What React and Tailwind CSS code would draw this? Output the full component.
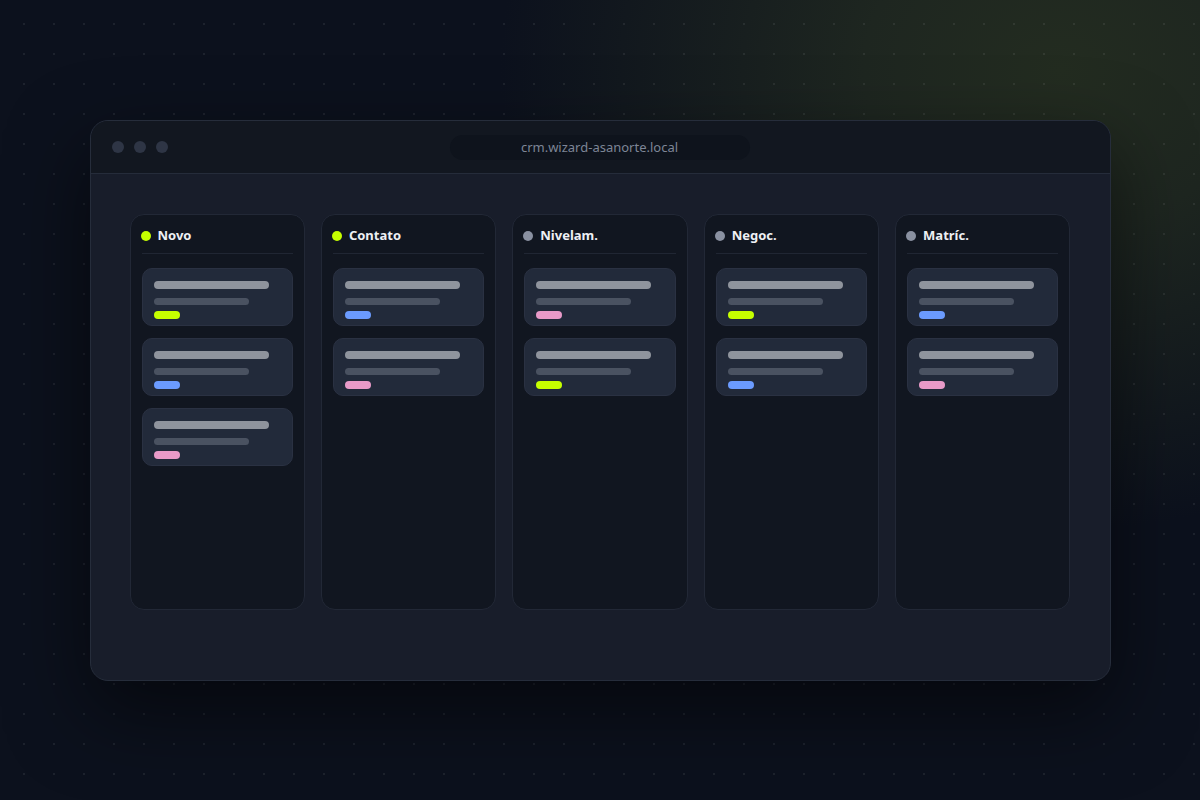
// Pipeline board mock: browser frame with five kanban columns
const COLUMNS = [
  { title: 'Novo', dot: 'bg-[#c6ff00]', tags: ['bg-[#c6ff00]', 'bg-[#6b9bff]', 'bg-[#e89ac8]'] },
  { title: 'Contato', dot: 'bg-[#c6ff00]', tags: ['bg-[#6b9bff]', 'bg-[#e89ac8]'] },
  { title: 'Nivelam.', dot: 'bg-[#8a91a1]', tags: ['bg-[#e89ac8]', 'bg-[#c6ff00]'] },
  { title: 'Negoc.', dot: 'bg-[#8a91a1]', tags: ['bg-[#c6ff00]', 'bg-[#6b9bff]'] },
  { title: 'Matríc.', dot: 'bg-[#8a91a1]', tags: ['bg-[#6b9bff]', 'bg-[#e89ac8]'] },
]

function Card({ tag }) {
  return (
    <div className="h-[58px] rounded-[10px] border border-[#2a3142] bg-[#222a3a] px-[11px] pt-3">
      <div className="h-2 w-[115px] rounded-full bg-[#8f949d]" />
      <div className="mt-[9px] h-[7px] w-[95px] rounded-full bg-[#4a5261]" />
      <div className={`mt-[6px] h-2 w-[26px] rounded-full ${tag}`} />
    </div>
  )
}

function Column({ col }) {
  return (
    <div className="flex h-[396px] flex-col rounded-[14px] border border-[#222836] bg-[#111620] px-[11px]">
      <div className="flex h-[39px] items-center gap-[7px] border-b border-[#202633] pt-[4px]">
        <span className={`ml-[-1px] h-[10px] w-[10px] rounded-full ${col.dot}`} />
        <span className="text-[13px] font-bold text-[#eef0f4]">{col.title}</span>
      </div>
      <div className="mt-[14px] flex flex-col gap-3">
        {col.tags.map((t, i) => <Card key={i} tag={t} />)}
      </div>
    </div>
  )
}

export default function App() {
  return (
    <div
      className="relative h-[800px] w-[1200px] overflow-hidden bg-[#0c111d] font-['Noto_Sans',sans-serif]"
    >
      {/* green glow top-right */}
      <div className="absolute inset-0 bg-[radial-gradient(ellipse_560px_460px_at_1060px_70px,#232c20_0%,#1e2620_35%,rgba(12,17,29,0)_100%)]" />
      {/* dot grid */}
      <div className="absolute inset-0 bg-[radial-gradient(circle,rgba(255,255,255,0.07)_1px,transparent_1.3px)] bg-[length:30px_30px] bg-[position:9px_9px]" />

      <div className="relative flex justify-center pt-[120px]">
        <div className="h-[561px] w-[1021px] overflow-hidden rounded-[18px] border border-[#262d3b] bg-[#181d2a] shadow-[0_30px_80px_rgba(0,0,0,0.55)]">
          {/* title bar */}
          <div className="relative flex h-[53px] items-center border-b border-[#252c3a] bg-[#121720] px-[21px]">
            <div className="flex gap-[10px]">
              <span className="h-3 w-3 rounded-full bg-[#2e3545]" />
              <span className="h-3 w-3 rounded-full bg-[#2e3545]" />
              <span className="h-3 w-3 rounded-full bg-[#2e3545]" />
            </div>
            <div className="absolute left-[359px] top-[14px] flex h-[25px] w-[300px] items-center justify-center rounded-full bg-[#0e131c] text-[13px] text-[#7d8596]">
              crm.wizard-asanorte.local
            </div>
          </div>

          {/* board */}
          <div className="grid grid-cols-5 gap-4 px-[39px] pt-[40px]">
            {COLUMNS.map(c => <Column key={c.title} col={c} />)}
          </div>
        </div>
      </div>
    </div>
  )
}
